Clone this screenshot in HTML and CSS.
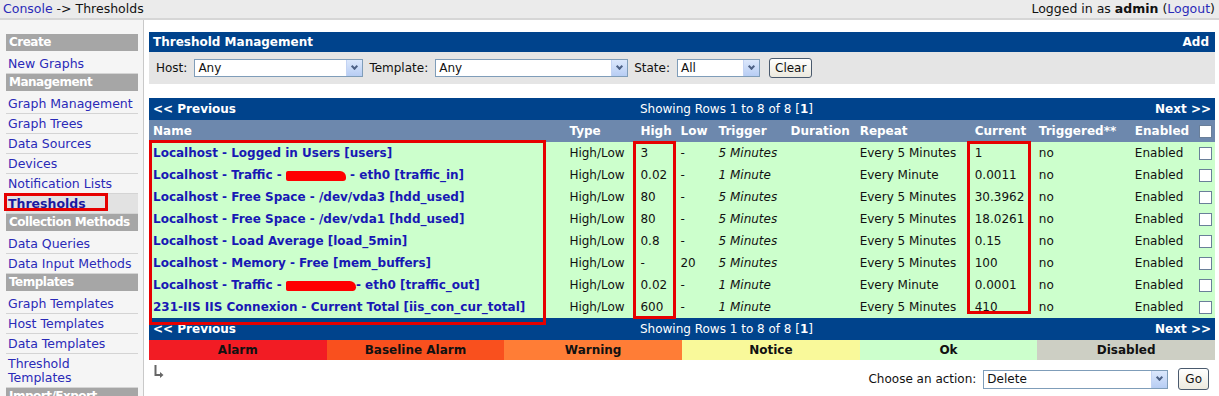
FILE: index.html
```html
<!DOCTYPE html>
<html lang="en">
<head>
  <meta charset="UTF-8" />
  <title>Console -> Thresholds</title>
  <link rel="stylesheet" href="styles.css">
</head>
<body>

<!-- top bar -->
<div class="topbar">
  <div class="crumb"><a href="#">Console</a> -&gt; Thresholds</div>
  <div class="login">Logged in as <b>admin</b> (<a href="#">Logout</a>)</div>
</div>

<div class="layout">
  <!-- side menu -->
  <div class="sidebar">
    <div class="menu">
      <div class="menu-head">Create</div>
      <div class="menu-item"><a href="#">New Graphs</a></div>
      <div class="menu-head">Management</div>
      <div class="menu-item"><a href="#">Graph Management</a></div>
      <div class="menu-item"><a href="#">Graph Trees</a></div>
      <div class="menu-item"><a href="#">Data Sources</a></div>
      <div class="menu-item"><a href="#">Devices</a></div>
      <div class="menu-item"><a href="#">Notification Lists</a></div>
      <div class="menu-item selected"><a href="#">Thresholds</a><span class="mark mark-menu"></span></div>
      <div class="menu-head">Collection Methods</div>
      <div class="menu-item"><a href="#">Data Queries</a></div>
      <div class="menu-item"><a href="#">Data Input Methods</a></div>
      <div class="menu-head">Templates</div>
      <div class="menu-item"><a href="#">Graph Templates</a></div>
      <div class="menu-item"><a href="#">Host Templates</a></div>
      <div class="menu-item"><a href="#">Data Templates</a></div>
      <div class="menu-item"><a href="#">Threshold Templates</a></div>
      <div class="menu-head">Import/Export</div>
    </div>
  </div>

  <!-- main area -->
  <div class="main">
    <div class="panel-title">
      <span>Threshold Management</span>
      <a href="#">Add</a>
    </div>
    <div class="filter">
      <span class="lbl">Host:</span>
      <div class="select sel-host"><span>Any</span><i class="arrow"></i></div>
      <span class="lbl">Template:</span>
      <div class="select sel-tpl"><span>Any</span><i class="arrow"></i></div>
      <span class="lbl">State:</span>
      <div class="select sel-state"><span>All</span><i class="arrow"></i></div>
      <button class="btn btn-clear">Clear</button>
    </div>

    <div class="list">
      <div class="nav">
        <span class="nav-prev">&lt;&lt; Previous</span>
        <span class="nav-mid">Showing Rows 1 to 8 of 8 [<b>1</b>]</span>
        <span class="nav-next">Next &gt;&gt;</span>
      </div>

      <table class="thold">
        <colgroup>
          <col style="width:416px"><col style="width:71px"><col style="width:40px"><col style="width:38px">
          <col style="width:72px"><col style="width:69px"><col style="width:115px"><col style="width:64px">
          <col style="width:96px"><col style="width:64px"><col style="width:20px">
        </colgroup>
        <thead>
          <tr>
            <th>Name</th><th>Type</th><th>High</th><th>Low</th><th>Trigger</th><th>Duration</th>
            <th>Repeat</th><th>Current</th><th>Triggered**</th><th>Enabled</th><th><i class="check"></i></th>
          </tr>
        </thead>
        <tbody>
          <tr>
            <td><a href="#">Localhost - Logged in Users [users]</a></td><td>High/Low</td><td>3</td><td>-</td>
            <td class="it">5 Minutes</td><td></td><td>Every 5 Minutes</td><td>1</td><td>no</td><td>Enabled</td><td><i class="check"></i></td>
          </tr>
          <tr>
            <td><a href="#">Localhost - Traffic - <span class="blot blot-a"></span> - eth0 [traffic_in]</a></td><td>High/Low</td><td>0.02</td><td>-</td>
            <td class="it">1 Minute</td><td></td><td>Every Minute</td><td>0.0011</td><td>no</td><td>Enabled</td><td><i class="check"></i></td>
          </tr>
          <tr>
            <td><a href="#">Localhost - Free Space - /dev/vda3 [hdd_used]</a></td><td>High/Low</td><td>80</td><td>-</td>
            <td class="it">5 Minutes</td><td></td><td>Every 5 Minutes</td><td>30.3962</td><td>no</td><td>Enabled</td><td><i class="check"></i></td>
          </tr>
          <tr>
            <td><a href="#">Localhost - Free Space - /dev/vda1 [hdd_used]</a></td><td>High/Low</td><td>80</td><td>-</td>
            <td class="it">5 Minutes</td><td></td><td>Every 5 Minutes</td><td>18.0261</td><td>no</td><td>Enabled</td><td><i class="check"></i></td>
          </tr>
          <tr>
            <td><a href="#">Localhost - Load Average [load_5min]</a></td><td>High/Low</td><td>0.8</td><td>-</td>
            <td class="it">5 Minutes</td><td></td><td>Every 5 Minutes</td><td>0.15</td><td>no</td><td>Enabled</td><td><i class="check"></i></td>
          </tr>
          <tr>
            <td><a href="#">Localhost - Memory - Free [mem_buffers]</a></td><td>High/Low</td><td>-</td><td>20</td>
            <td class="it">5 Minutes</td><td></td><td>Every 5 Minutes</td><td>100</td><td>no</td><td>Enabled</td><td><i class="check"></i></td>
          </tr>
          <tr>
            <td><a href="#">Localhost - Traffic - <span class="blot blot-b"></span>- eth0 [traffic_out]</a></td><td>High/Low</td><td>0.02</td><td>-</td>
            <td class="it">1 Minute</td><td></td><td>Every Minute</td><td>0.0001</td><td>no</td><td>Enabled</td><td><i class="check"></i></td>
          </tr>
          <tr>
            <td><a href="#">231-IIS IIS Connexion - Current Total [iis_con_cur_total]</a></td><td>High/Low</td><td>600</td><td>-</td>
            <td class="it">1 Minute</td><td></td><td>Every 5 Minutes</td><td>410</td><td>no</td><td>Enabled</td><td><i class="check"></i></td>
          </tr>
        </tbody>
      </table>

      <div class="nav">
        <span class="nav-prev">&lt;&lt; Previous</span>
        <span class="nav-mid">Showing Rows 1 to 8 of 8 [<b>1</b>]</span>
        <span class="nav-next">Next &gt;&gt;</span>
      </div>

      <div class="legend">
        <span class="st-alarm">Alarm</span>
        <span class="st-baseline">Baseline Alarm</span>
        <span class="st-warning">Warning</span>
        <span class="st-notice">Notice</span>
        <span class="st-ok">Ok</span>
        <span class="st-disabled">Disabled</span>
      </div>

      <!-- red annotation boxes -->
      <span class="mark mark-name"></span>
      <span class="mark mark-high"></span>
      <span class="mark mark-current"></span>
    </div>

    <div class="actions">
      <svg class="corner" width="10" height="14" viewBox="0 0 10 14">
        <path d="M1.5 0 V10 H6" fill="none" stroke="#666" stroke-width="2"/>
        <path d="M6 7 L9.5 10 L6 13 Z" fill="#666"/>
      </svg>
      <div class="action-right">
        <span class="lbl">Choose an action:</span>
        <div class="select sel-action"><span>Delete</span><i class="arrow"></i></div>
        <button class="btn btn-go">Go</button>
      </div>
    </div>
  </div>
</div>

</body>
</html>
```

FILE: styles.css
```css
body {
  margin: 0;
  font-family: "DejaVu Sans", Verdana, sans-serif;
  font-size: 12px;
  color: #111;
  background: #fff;
}
a {
  text-decoration: none;
}

/* top bar */
.topbar {
  display: flex;
  justify-content: space-between;
  height: 18px;
  line-height: 18px;
  padding: 0 4px 0 3px;
  background: #ebebeb;
  border-bottom: 2px solid #d6d6d6;
  font-size: 12.5px;
}
.topbar a {
  color: #2a2ab8;
}

.layout {
  display: flex;
  align-items: stretch;
  min-height: 376px;
}

/* side menu */
.sidebar {
  width: 144px;
  flex-shrink: 0;
  background: #f5f5f5;
  border-right: 1px solid #c9c9c9;
  padding-top: 14px;
  box-sizing: border-box;
  overflow: hidden;
}
.menu {
  margin-left: 6px;
  width: 132px;
  font-size: 12.5px;
}
.menu-head {
  height: 17px;
  line-height: 17px;
  margin-bottom: 3px;
  padding-left: 3px;
  background: #a6a6a6;
  color: #fff;
  font-size: 12px;
  font-weight: bold;
  letter-spacing: -0.5px;
  white-space: nowrap;
}
.menu-item {
  position: relative;
  padding: 3px 4px 2px 2px;
  line-height: 14px;
  border-bottom: 1px solid #d4d4d4;
}
.menu-item a {
  color: #2a2ab8;
}
.menu-item.selected {
  background: #e2e2e2;
}
.menu-item.selected a {
  font-weight: bold;
  color: #1a1aa0;
}

/* main area */
.main {
  flex: 1;
  padding: 12px 4px 0 5px;
}
.panel-title {
  display: flex;
  justify-content: space-between;
  height: 20px;
  line-height: 20px;
  padding: 0 6px 0 4px;
  background: #00438c;
  color: #fff;
  font-weight: bold;
}
.panel-title a {
  color: #fff;
}
.filter {
  display: flex;
  align-items: center;
  height: 32px;
  padding-left: 7px;
  background: #e5e5e5;
}
.lbl {
  margin-right: 7px;
}
.select {
  display: flex;
  align-items: center;
  justify-content: space-between;
  height: 18px;
  box-sizing: border-box;
  border: 1px solid #7f9db9;
  background: #fff;
  padding-left: 3px;
  margin-right: 6px;
}
.select .arrow {
  width: 15px;
  height: 16px;
  margin-right: 0;
  background: linear-gradient(#dce8fc, #b7cdf4);
  border-left: 1px solid #c3d3f3;
  position: relative;
}
.select .arrow::after {
  content: "";
  position: absolute;
  left: 5px;
  top: 4px;
  width: 3px;
  height: 3px;
  border-right: 2px solid #4d6185;
  border-bottom: 2px solid #4d6185;
  transform: rotate(45deg);
}
.sel-host { width: 169px; }
.sel-tpl { width: 193px; }
.sel-state { width: 83px; margin-right: 9px; }
.btn {
  font-family: "DejaVu Sans", Verdana, sans-serif;
  font-size: 12px;
  height: 20px;
  padding: 0 5px;
  border: 1px solid #4a5a6e;
  border-radius: 3px;
  background: linear-gradient(#ffffff, #ece9de);
  color: #111;
}

/* list */
.list {
  position: relative;
  margin-top: 14px;
}
.nav {
  display: grid;
  grid-template-columns: 300px 1fr 211px;
  height: 22px;
  line-height: 22px;
  background: #00438c;
  color: #fff;
  padding: 0 4px;
}
.nav-prev, .nav-next {
  font-weight: bold;
}
.nav-mid {
  text-align: center;
}
.nav-next {
  text-align: right;
}

.thold {
  width: 100%;
  table-layout: fixed;
  border-collapse: collapse;
}
.thold th {
  height: 22px;
  padding: 0 4px;
  background: #6d88ad;
  color: #fff;
  text-align: left;
  white-space: nowrap;
}
.thold td {
  height: 22px;
  padding: 0 4px;
  background: #ccffcc;
  white-space: nowrap;
  overflow: hidden;
}
.thold td a {
  color: #1818b4;
  font-weight: bold;
}
.thold .it {
  font-style: italic;
}
.check {
  display: inline-block;
  width: 11px;
  height: 11px;
  border: 1px solid #6a7f99;
  background: #fff;
  vertical-align: middle;
}
.blot {
  display: inline-block;
  height: 10px;
  background: #f00;
  vertical-align: middle;
}
.blot-a {
  width: 60px;
  border-radius: 2px 6px 3px 2px;
}
.blot-b {
  width: 70px;
  border-radius: 2px 7px 4px 2px;
}

.legend {
  display: grid;
  grid-template-columns: repeat(6, 1fr);
  height: 20px;
  line-height: 20px;
  font-weight: bold;
  text-align: center;
}
.st-alarm { background: #f21c24; }
.st-baseline { background: #f9501e; }
.st-warning { background: #ff7d36; }
.st-notice { background: #f9f99a; }
.st-ok { background: #ccffcc; }
.st-disabled { background: #cdcfc4; }

/* red annotation boxes */
.mark {
  position: absolute;
  border: 3px solid #e60000;
  box-sizing: border-box;
}
.mark-menu {
  left: -2px;
  top: -1px;
  width: 104px;
  height: 18px;
}
.mark-name {
  left: 0;
  top: 42px;
  width: 397px;
  height: 185px;
}
.mark-high {
  left: 484px;
  top: 43px;
  width: 43px;
  height: 178px;
}
.mark-current {
  left: 818px;
  top: 43px;
  width: 64px;
  height: 173px;
}

/* bottom actions */
.actions {
  display: flex;
  justify-content: space-between;
  align-items: flex-start;
  padding-top: 5px;
}
.corner {
  margin-left: 5px;
}
.action-right {
  display: flex;
  align-items: center;
  margin-top: 3px;
  margin-right: 6px;
}
.sel-action {
  width: 185px;
  height: 19px;
  margin-right: 10px;
}
.sel-action .arrow {
  height: 17px;
}
.btn-go {
  height: 22px;
  padding: 0 6px;
}
```
